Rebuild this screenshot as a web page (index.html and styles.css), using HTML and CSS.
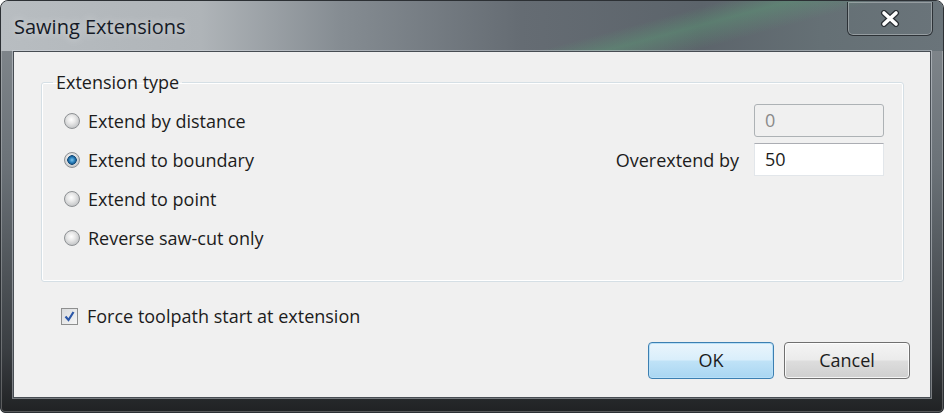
FILE: index.html
```html
<!DOCTYPE html>
<html lang="en">
<head>
<meta charset="UTF-8">
<title>Sawing Extensions</title>
<link rel="stylesheet" href="styles.css">
</head>
<body>
<div class="window">
    <div class="titlebar">
        <span class="title">Sawing Extensions</span>
        <div class="close">
            <svg width="20" height="17" viewBox="0 0 20 17">
                <path d="M4 3 L16 14 M16 3 L4 14" stroke="#2a2f34" stroke-width="6" stroke-linecap="round"/>
                <path d="M4 3 L16 14 M16 3 L4 14" stroke="#fff" stroke-width="3.6" stroke-linecap="round"/>
            </svg>
        </div>
    </div>

    <div class="client">
        <fieldset class="group">
            <legend>Extension type</legend>
            <div class="group-grid">
                <div class="radio"><span class="radio-dot"></span>Extend by distance</div>
                <div></div>
                <div class="field disabled">0</div>

                <div class="radio"><span class="radio-dot checked"></span>Extend to boundary</div>
                <div class="field-label">Overextend by</div>
                <div class="field">50</div>

                <div class="radio"><span class="radio-dot"></span>Extend to point</div>
                <div></div>
                <div></div>

                <div class="radio"><span class="radio-dot"></span>Reverse saw-cut only</div>
                <div></div>
                <div></div>
            </div>
        </fieldset>

        <div class="check">
            <span class="check-box">
                <svg width="13" height="13" viewBox="0 0 13 13">
                    <path d="M2.5 6.5 L5.5 10 L10.5 2" fill="none" stroke="#2b57a8" stroke-width="2.2"/>
                </svg>
            </span>
            Force toolpath start at extension
        </div>

        <div class="buttons">
            <div class="btn btn-default">OK</div>
            <div class="btn">Cancel</div>
        </div>
    </div>
</div>
</body>
</html>
```

FILE: styles.css
```css
body {
    margin: 0;
    background: #ffffff;
    font-family: "Open Sans", "Noto Sans", sans-serif;
    color: #1c1c1c;
}

.window {
    width: 944px;
    height: 413px;
    box-sizing: border-box;
    border: 1px solid #2c3034;
    border-radius: 8px 8px 5px 5px;
    background: linear-gradient(180deg, #868c91 0%, #6b7278 40%, #3a3e42 85%, #202224 100%);
    box-shadow: inset 0 0 0 1px rgba(255, 255, 255, 0.25);
    overflow: hidden;
}

.titlebar {
    display: flex;
    align-items: flex-start;
    height: 50px;
    background:
        linear-gradient(165deg, transparent 64%, rgba(90, 170, 120, 0.35) 70%, transparent 78%),
        linear-gradient(90deg, #b8bdc1 0, #afb4b8 200px, #858c92 340px, #656c73 520px, #5c646b 700px, #657075 820px, #6a747a 944px);
}

.title {
    padding-left: 13px;
    line-height: 52px;
    font-size: 20px;
    color: #151a26;
    text-shadow: 0 0 8px rgba(255, 255, 255, 0.6);
}

.close {
    margin: 1px 10px 0 auto;
    width: 86px;
    height: 34px;
    box-sizing: border-box;
    border: 1px solid rgba(20, 24, 28, 0.7);
    border-top: none;
    border-radius: 0 0 6px 6px;
    box-shadow: inset 0 0 0 1px rgba(255, 255, 255, 0.3);
    display: flex;
    align-items: center;
    justify-content: center;
}

.client {
    margin: 0 12px;
    height: 347px;
    box-sizing: border-box;
    border: 1px solid #474d53;
    box-shadow: 0 0 0 1px rgba(220, 225, 230, 0.45);
    background: #f0f0f0;
    padding: 20px 20px 0 27px;
    font-size: 18px;
}

.group {
    margin: 0 6px 0 0;
    padding: 9px 0 24px;
    border: 1px solid #d5dfe5;
    border-radius: 3px;
    box-shadow: inset 0 0 0 1px #ffffff;
}

.group legend {
    margin-left: 11px;
    padding: 0 3px;
    line-height: 20px;
}

.group-grid {
    display: grid;
    grid-template-columns: 1fr auto 130px;
    grid-auto-rows: 39px;
    column-gap: 15px;
    align-items: center;
    padding: 0 19px 0 22px;
}

.radio {
    display: flex;
    align-items: center;
    gap: 8px;
}

.radio-dot {
    width: 16px;
    height: 16px;
    box-sizing: border-box;
    border-radius: 50%;
    border: 1px solid #8d9093;
    background: radial-gradient(circle at 45% 40%, #ffffff 0, #e8e8e8 35%, #c4c6c8 75%, #b0b3b6 100%);
}

.radio-dot.checked {
    background:
        radial-gradient(circle at 50% 50%, #7ec6ee 0, #2c83bf 2.5px, #144a78 4.5px, transparent 5px),
        radial-gradient(circle at 45% 40%, #ffffff 0, #e8e8e8 35%, #c4c6c8 75%, #b0b3b6 100%);
}

.field-label {
    text-align: right;
}

.field {
    height: 33px;
    box-sizing: border-box;
    padding-left: 10px;
    line-height: 31px;
    background: #ffffff;
    border: 1px solid #e2e6ea;
    border-top-color: #abadb3;
}

.field.disabled {
    background: #f0f0f0;
    color: #8a8a8a;
    border: 1px solid #adb2b5;
    border-radius: 3px;
}

.check {
    display: flex;
    align-items: center;
    gap: 9px;
    margin-top: 24px;
    padding-left: 20px;
    height: 20px;
}

.check-box {
    width: 17px;
    height: 17px;
    box-sizing: border-box;
    border: 1px solid #8e8f8f;
    background: linear-gradient(135deg, #d8dadc, #f6f6f6);
    display: flex;
    align-items: center;
    justify-content: center;
}

.buttons {
    display: flex;
    justify-content: flex-end;
    gap: 10px;
    margin-top: 16px;
}

.btn {
    width: 126px;
    height: 37px;
    box-sizing: border-box;
    border: 1px solid #707070;
    border-radius: 4px;
    background: linear-gradient(180deg, #f4f4f4 0%, #ebebeb 48%, #dddddd 52%, #cfcfcf 100%);
    box-shadow: inset 0 0 0 1px rgba(255, 255, 255, 0.8);
    text-align: center;
    line-height: 35px;
}

.btn-default {
    border-color: #3c7fb1;
    background: linear-gradient(180deg, #eaf5fc 0%, #d9eefb 48%, #bfe2f7 52%, #a9d6f2 100%);
    box-shadow: inset 0 0 0 1px #b9e0f8;
}
```
